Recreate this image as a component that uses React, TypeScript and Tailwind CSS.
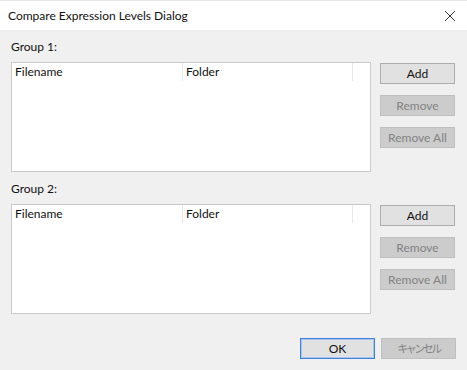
import React from 'react';

const font = { fontFamily: 'Lato, "Noto Sans CJK JP", sans-serif' };

const FileList: React.FC = () => (
  <div className="w-[360px] h-[110px] bg-white border border-[#c9c9c9] shrink-0">
    <div className="flex h-[18px] text-[12px] leading-[18px] text-[#111]">
      <div className="w-[171px] pl-[3px] border-r border-[#e8e8e8]">Filename</div>
      <div className="w-[170px] pl-[3px] border-r border-[#e8e8e8]">Folder</div>
    </div>
  </div>
);

const Btn: React.FC<{ label: string; disabled?: boolean; focus?: boolean; cjk?: boolean }> = ({ label, disabled, focus, cjk }) => (
  <button
    className={`w-[75px] h-[21px] leading-none flex items-center justify-center border ${
      cjk ? 'text-[11px] tracking-[-2.5px]' : 'text-[12px]'
    } ${
      disabled
        ? 'bg-[#cccccc] border-[#bfbfbf] text-[#838383]'
        : focus
        ? 'bg-[#e1e1e1] border-[#3c80e0] shadow-[inset_0_0_0_1px_#a9c6ee] text-[#111]'
        : 'bg-[#e1e1e1] border-[#adadad] text-[#111]'
    }`}
  >
    {label}
  </button>
);

const Group: React.FC<{ title: string }> = ({ title }) => (
  <div>
    <div className="h-[16px] text-[12px] leading-[16px] text-[#111]">{title}</div>
    <div className="flex gap-[9px] mt-[7px]">
      <FileList />
      <div className="flex flex-col gap-[11px] mt-[1px]">
        <Btn label="Add" />
        <Btn label="Remove" disabled />
        <Btn label="Remove All" disabled />
      </div>
    </div>
  </div>
);

const App: React.FC = () => {
  return (
    <div className="w-[467px] h-[370px] bg-[#f0f0f0] overflow-hidden" style={font}>
      {/* title bar */}
      <div className="h-[30px] bg-white border-t border-[#e8e8e8] flex items-center justify-between pl-[8px] pr-[10px]">
        <span className="text-[12px] text-[#111]">Compare Expression Levels Dialog</span>
        <svg width="12" height="12" viewBox="0 0 12 12" className="mr-[1px]">
          <path d="M1 1 L11 11 M11 1 L1 11" stroke="#333" strokeWidth="1" fill="none" />
        </svg>
      </div>

      <div className="pl-[11px] pr-[12px] pt-[9px] flex flex-col gap-[9px]">
        <Group title="Group 1:" />
        <Group title="Group 2:" />
      </div>

      <div className="flex justify-end gap-[6px] pr-[11px] mt-[24px]">
        <Btn label="OK" focus />
        <Btn label="キャンセル" disabled cjk />
      </div>
    </div>
  );
};

export default App;
